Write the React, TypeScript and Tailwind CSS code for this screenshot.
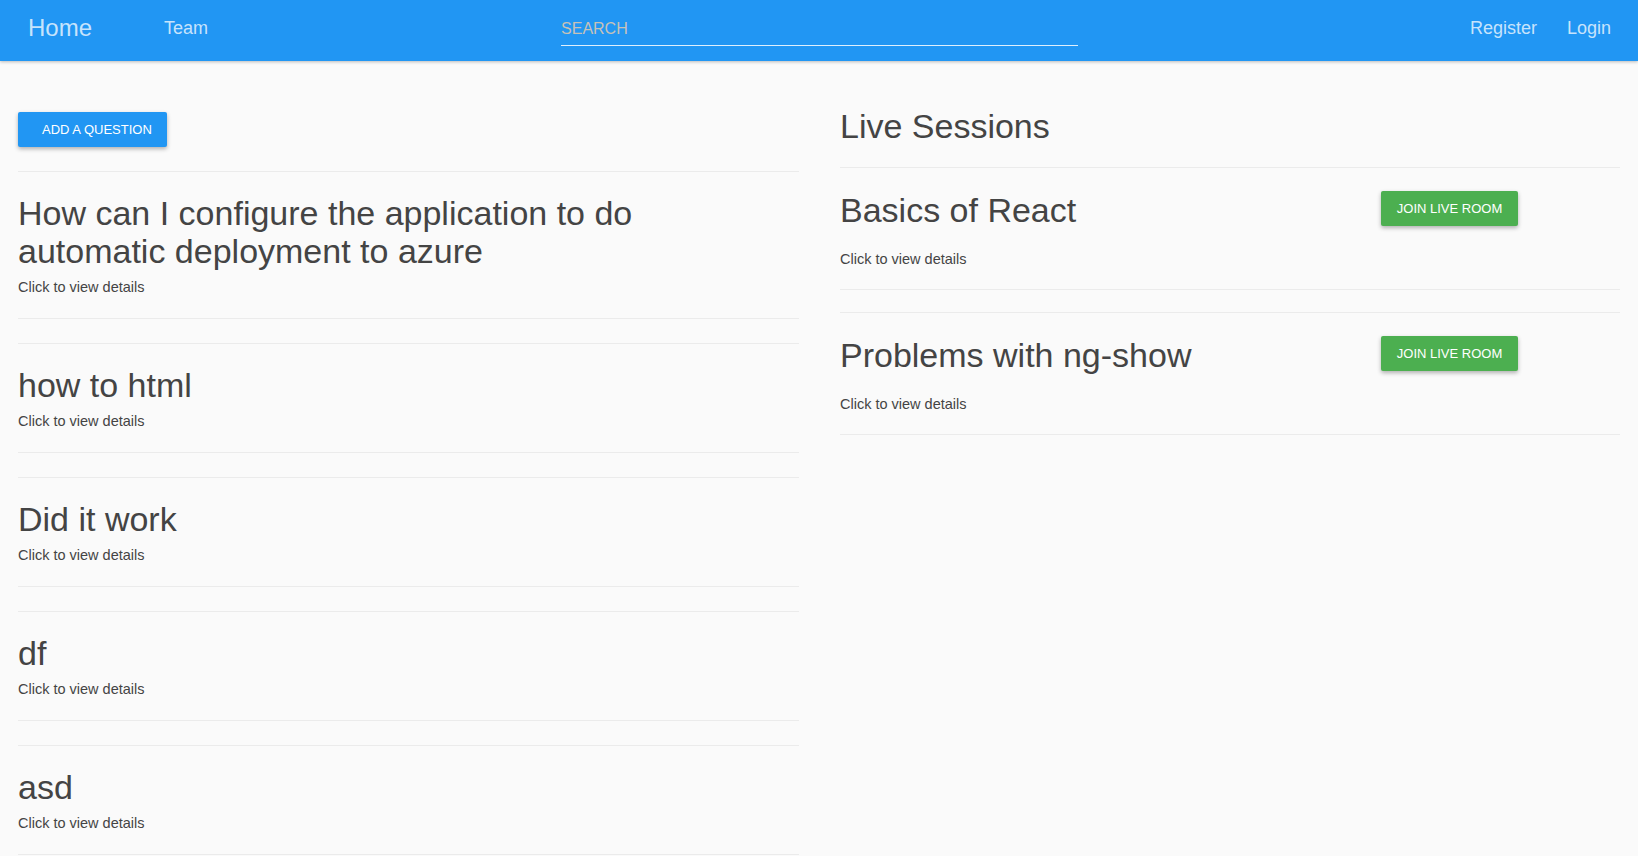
import React from "react";

const questions = [
    "How can I configure the application to do automatic deployment to azure",
    "how to html",
    "Did it work",
    "df",
    "asd",
];

const sessions = ["Basics of React", "Problems with ng-show"];

export default function App() {
    return (
        <div className="min-h-[856px] bg-[#fafafa] text-[#444] font-['Liberation_Sans',Arial,sans-serif]">
            {/* Barra superior */}
            <header className="h-[61px] pb-[6px] bg-[#2196f3] shadow-[0_1px_3px_rgba(0,0,0,0.25)] flex items-center text-white/75">
                <a className="ml-[28px] text-[24px] leading-none">Home</a>
                <a className="ml-[72px] text-[18px] leading-none">Team</a>
                <input
                    placeholder="SEARCH"
                    className="ml-[353px] w-[517px] h-[36px] pt-[3px] bg-transparent text-[16px] text-white placeholder:text-[#c7c2b8] border-b border-white/85 outline-none"
                />
                <div className="ml-auto mr-[27px] flex items-center gap-[30px] text-[18px] leading-none">
                    <a>Register</a>
                    <a>Login</a>
                </div>
            </header>

            <main className="flex gap-[41px] px-[18px]">
                {/* Preguntas */}
                <section className="w-[781px] pt-[51px]">
                    <button className="h-[35px] w-[149px] pl-[24px] text-left bg-[#2196f3] text-white text-[13px] rounded-[2px] shadow-[0_2px_4px_rgba(0,0,0,0.3)]">
                        ADD A QUESTION
                    </button>
                    <div className="mt-[24px] flex flex-col gap-[24px]">
                        {questions.map((q) => (
                            <div key={q} className="border-y border-[#ebebeb] pt-[22px] pb-[21px]">
                                <h2 className="pr-[24px] text-[34px] leading-[38px]">{q}</h2>
                                <p className="mt-[7px] text-[14.5px] leading-[20px]">Click to view details</p>
                            </div>
                        ))}
                    </div>
                </section>

                {/* Sesiones en vivo */}
                <section className="w-[780px] pt-[46px]">
                    <h1 className="text-[34px] leading-[38px]">Live Sessions</h1>
                    <div className="mt-[22px] flex flex-col gap-[22px]">
                        {sessions.map((s) => (
                            <div key={s} className="border-y border-[#ebebeb] pt-[23px] pb-[20px]">
                                <div className="flex items-start">
                                    <h2 className="w-[541px] text-[34px] leading-[38px]">{s}</h2>
                                    <button className="h-[35px] w-[137px] bg-[#4caf50] text-white text-[13px] rounded-[2px] shadow-[0_2px_4px_rgba(0,0,0,0.3)]">
                                        JOIN LIVE ROOM
                                    </button>
                                </div>
                                <p className="mt-[20px] text-[14.5px] leading-[20px]">Click to view details</p>
                            </div>
                        ))}
                    </div>
                </section>
            </main>
        </div>
    );
}
